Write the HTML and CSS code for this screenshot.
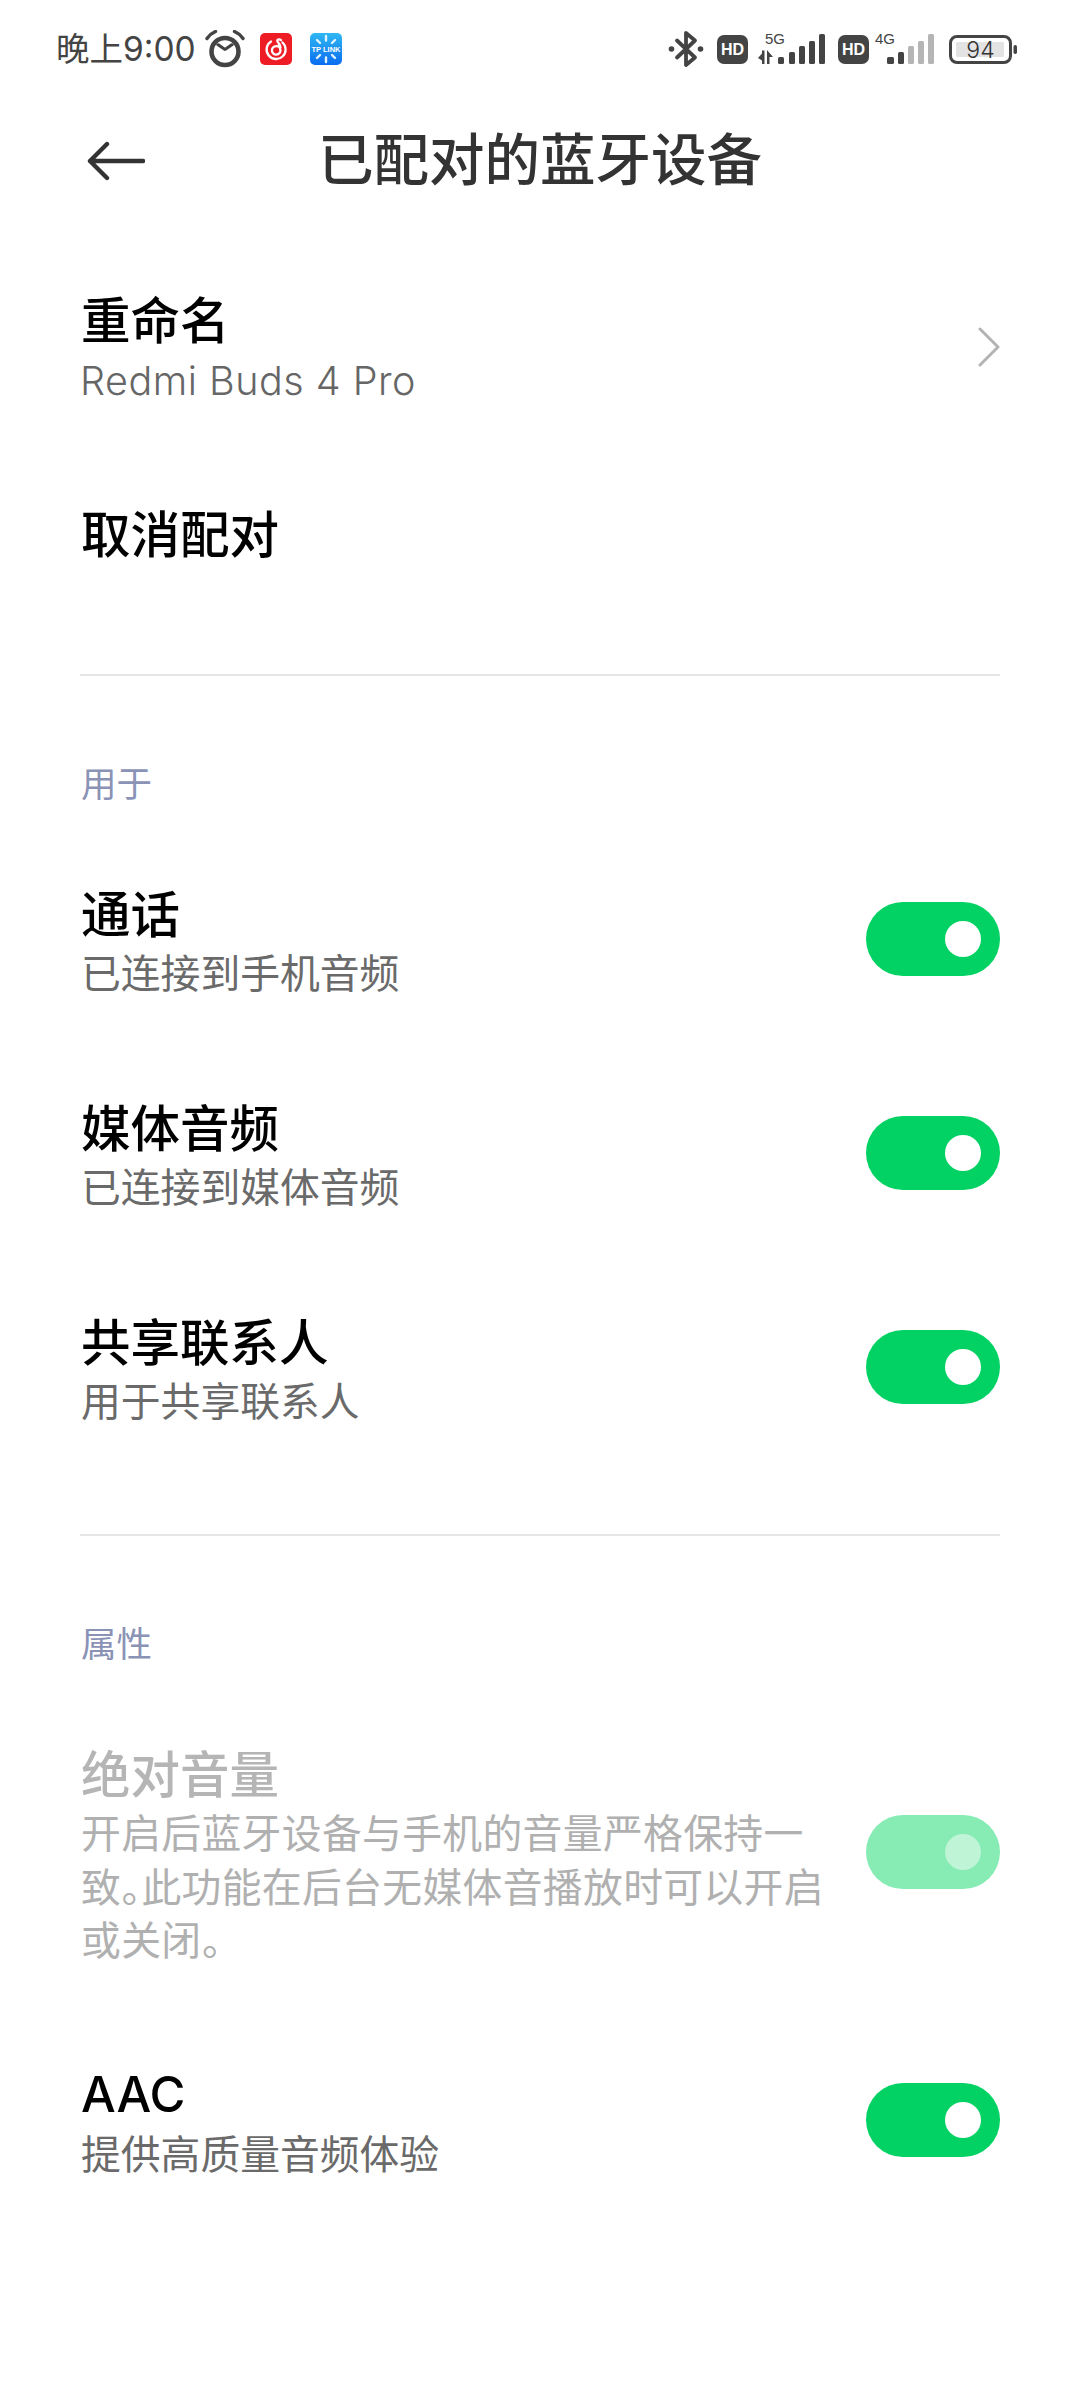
FILE: index.html
```html
<!DOCTYPE html>
<html lang="zh-CN">
<head>
<meta charset="utf-8">
<title>已配对的蓝牙设备</title>
<link rel="stylesheet" href="styles.css">
</head>
<body>
<div class="page">
  <header class="status">
    <span class="time">晚上9:00</span>
    <svg class="ic-alarm" viewBox="0 0 40 38" width="40" height="38">
      <circle cx="20" cy="21.500" r="13.500" fill="none" stroke="#444" stroke-width="4.600"/>
      <path d="M13 16.500l7 6 7-6" transform="translate(0 1.500) scale(1 .8)" fill="none" stroke="#444" stroke-width="3.600" stroke-linecap="round" stroke-linejoin="round"/>
      <path d="M2 8.500C4 5.500 7 3 10.500 1.500M38 8.500C36 5.500 33 3 29.500 1.500" fill="none" stroke="#444" stroke-width="3.400" stroke-linecap="round"/>
    </svg>
    <svg class="ic-app-a" viewBox="0 0 32 32" width="32" height="32">
      <rect width="32" height="32" rx="5" fill="#ee1c25"/>
      <path d="M11 8.500A9.500 9.500 0 1 0 22.500 9.500M20.500 14.500C20 11 17.500 8.500 17.500 8.500C16.800 6.500 19 5.500 21 7.200M18 13.500A4.300 4.300 0 1 0 20.500 17.500L18.800 11" fill="none" stroke="#fff" stroke-width="2.300" stroke-linecap="round"/>
    </svg>
    <svg class="ic-app-b" viewBox="0 0 32 32" width="32" height="32">
      <defs><linearGradient id="tp" x1="0" y1="0" x2="0" y2="1"><stop offset="0" stop-color="#2fb8f3"/><stop offset="1" stop-color="#0b6cf0"/></linearGradient></defs>
      <rect width="32" height="32" rx="5" fill="url(#tp)"/>
      <path d="M16 3v4.500M16 24.500V29M7 7l3 3M25 7l-3 3M7 25l3-3M25 25l-3-3" stroke="#dff4ff" stroke-width="2.400" stroke-linecap="round"/>
      <text x="16" y="18.500" class="tp-text">TP LINK</text>
    </svg>
    <span class="status-spacer"></span>
    <svg class="ic-bt" viewBox="0 0 36 38" width="36" height="38">
      <path d="M9 10.500L27 27.500L18 35V3L27 10.500L9 27.500" fill="none" stroke="#444" stroke-width="3.800" stroke-linejoin="round" stroke-linecap="round"/>
      <circle cx="3.500" cy="19" r="2.800" fill="#444"/><circle cx="32.500" cy="19" r="2.800" fill="#444"/>
    </svg>
    <svg class="ic-hd" viewBox="0 0 31 29" width="31" height="29"><rect width="31" height="29" rx="7" fill="#444"/><text x="15.500" y="20.300" class="hd-text">HD</text></svg>
    <svg class="ic-sig-a" viewBox="0 -6 68 38" width="68" height="38">
      <text x="7" y="10.500" class="net-text">5G</text>
      <path d="M0 25l4-4.500v-3h2.500V31H4v-3.500zM9 17v14h2.500v-7h3.500z" fill="#444"/>
      <rect x="20" y="24" width="6" height="7" rx="1.500" fill="#444"/><rect x="31" y="19" width="6" height="12" rx="1.500" fill="#444"/><rect x="41" y="13" width="6" height="18" rx="1.500" fill="#444"/><rect x="51" y="8" width="6" height="23" rx="1.500" fill="#444"/><rect x="61" y="1" width="6" height="30" rx="1.500" fill="#444"/>
    </svg>
    <svg class="ic-hd" viewBox="0 0 31 29" width="31" height="29"><rect width="31" height="29" rx="7" fill="#444"/><text x="15.500" y="20.300" class="hd-text">HD</text></svg>
    <svg class="ic-sig-b" viewBox="0 -6 60 38" width="60" height="38">
      <text x="0" y="11" class="net-text">4G</text>
      <rect x="12" y="24" width="7" height="7" rx="1.500" fill="#444"/><rect x="23" y="19" width="6" height="12" rx="1.500" fill="#444"/><rect x="33" y="13" width="6" height="18" rx="1.500" fill="#b5b5b5"/><rect x="43" y="8" width="6" height="23" rx="1.500" fill="#b5b5b5"/><rect x="53" y="1" width="6" height="30" rx="1.500" fill="#b5b5b5"/>
    </svg>
    <svg class="ic-bat" viewBox="0 0 68 29" width="68" height="29">
      <rect x="1.500" y="1.500" width="60" height="26" rx="6.500" fill="none" stroke="#444" stroke-width="3"/>
      <rect x="7" y="7" width="48" height="15" rx="1.500" fill="#e3e3e3"/>
      <text x="31.500" y="23" class="bat-text">94</text>
      <rect x="64.500" y="10" width="3.500" height="9" rx="1.700" fill="#444"/>
    </svg>
  </header>

  <nav class="nav">
    <svg class="back" viewBox="0 0 58 40" width="58" height="40">
      <path d="M56 20H3M20 3L3 20l17 17" fill="none" stroke="#333" stroke-width="4.400" stroke-linecap="round" stroke-linejoin="round"/>
    </svg>
    <h1 class="nav-title">已配对的蓝牙设备</h1>
  </nav>

  <section class="group">
    <div class="row">
      <div class="row-text"><div class="row-title">重命名</div><div class="row-sub latin">Redmi Buds 4 Pro</div></div>
      <svg class="chevron" viewBox="0 0 22 40" width="22" height="40"><path d="M2 2l18 18L2 38" fill="none" stroke="#b3b3b3" stroke-width="3" stroke-linecap="round" stroke-linejoin="round"/></svg>
    </div>
    <div class="row">
      <div class="row-text"><div class="row-title">取消配对</div></div>
    </div>
  </section>

  <hr class="divider">

  <div class="label">用于</div>
  <section class="group">
    <div class="row">
      <div class="row-text"><div class="row-title">通话</div><div class="row-sub">已连接到手机音频</div></div>
      <span class="switch"><span class="knob"></span></span>
    </div>
    <div class="row">
      <div class="row-text"><div class="row-title">媒体音频</div><div class="row-sub">已连接到媒体音频</div></div>
      <span class="switch"><span class="knob"></span></span>
    </div>
    <div class="row">
      <div class="row-text"><div class="row-title">共享联系人</div><div class="row-sub">用于共享联系人</div></div>
      <span class="switch"><span class="knob"></span></span>
    </div>
  </section>

  <hr class="divider divider-tight">

  <div class="label">属性</div>
  <section class="group">
    <div class="row row-disabled">
      <div class="row-text"><div class="row-title">绝对音量</div><div class="row-sub">开启后蓝牙设备与手机的音量严格保持一致。此功能在后台无媒体音播放时可以开启或关闭。</div></div>
      <span class="switch"><span class="knob"></span></span>
    </div>
    <div class="row">
      <div class="row-text"><div class="row-title latin-title">AAC</div><div class="row-sub">提供高质量音频体验</div></div>
      <span class="switch"><span class="knob"></span></span>
    </div>
  </section>
</div>
</body>
</html>
```
FILE: styles.css
```css
* { box-sizing: border-box; }
html, body { margin: 0; padding: 0; background: #fff; }
body { font-family: "Noto Sans CJK SC", "Noto Sans", sans-serif; }
.page { width: 1080px; height: 2400px; overflow: hidden; background: #fff; }

.status { display: flex; align-items: center; height: 98px; padding: 0 63px 0 56px; }
.time { font-size: 33.500px; color: #444; line-height: 44px; width: 149px; white-space: nowrap; font-family: "Inter", "Noto Sans CJK SC", sans-serif; }
.ic-app-a { margin-left: 15px; }
.ic-app-b { margin-left: 18px; }
.status-spacer { flex: 1; }
.ic-bt { margin-right: 13px; }
.ic-sig-a { margin: -6px 12px 0 10px; }
.ic-sig-b { margin: -6px 14px 0 6px; }
.tp-text { font: 700 7.500px "Liberation Sans", sans-serif; fill: #fff; text-anchor: middle; }
.hd-text { font: 700 16px "Liberation Sans", sans-serif; fill: #fff; text-anchor: middle; }
.net-text { font: 400 15px "Liberation Sans", sans-serif; fill: #444; }
.bat-text { font: 300 23px "Inter", sans-serif; fill: #333; text-anchor: middle; }

.nav { display: flex; align-items: center; height: 120px; padding-left: 87px; }
.back { margin-top: 6px; }
.nav-title { margin: 0 0 4px 173px; font-size: 55.500px; line-height: 70px; font-weight: 500; color: #333; white-space: nowrap; }

.group { padding-top: 23px; }
.row { display: flex; align-items: center; padding: 45px 80px 51px 81px; }
.row-text { flex: 1; min-width: 0; margin-right: 25px; }
.row-title { font-size: 49.500px; line-height: 64px; font-weight: 500; color: #000; }
.row-sub { font-size: 39.800px; line-height: 54px; color: #6a6a6a; }
.latin { font-family: "Inter", "Noto Sans", sans-serif; font-weight: 300; color: #666; font-size: 39.500px; letter-spacing: .5px; margin: 4px 0 -4px -1px; }
.latin-title { font-family: "Inter", "Noto Sans CJK SC", sans-serif; font-size: 49px; margin-top: 2px; margin-bottom: -2px; }
.chevron { display: block; margin-top: 4px; }

.switch { display: flex; align-items: center; justify-content: flex-end; width: 134px; height: 74px; padding-right: 19px; border-radius: 37px; background: #02d263; flex: none; }
.knob { display: block; width: 36px; height: 36px; border-radius: 50%; background: #fff; }

.row-disabled .row-title { color: #b5b5b5; }
.row-disabled .row-sub { color: #b0b0b0; line-height: 53.500px; font-feature-settings: "palt"; letter-spacing: .35px; }
.row-disabled .switch { background: #86ecb4; }
.row-disabled .knob { background: #bff4d7; }

.divider { height: 2px; margin: 59px 80px 0; border: 0; background: #e6e6e6; }
.divider-tight { margin-top: 57px; }
.label { margin: 79px 0 3px 81px; font-size: 35.500px; line-height: 54px; color: #8a93b5; }
```
